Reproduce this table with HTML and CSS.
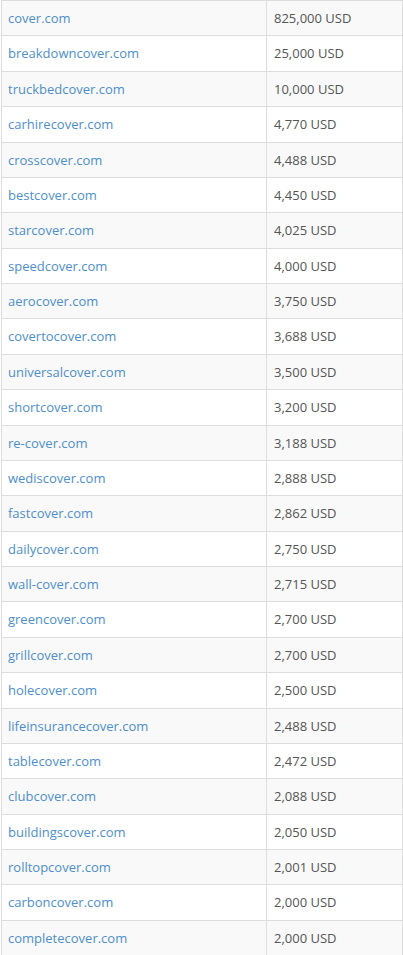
FILE: index.html
```html
<!DOCTYPE html>
<html lang="en">
<head>
  <meta charset="UTF-8" />
  <meta name="viewport" content="width=device-width, initial-scale=1.0"/>
  <title>Cover domains</title>
  <link rel="stylesheet" href="styles.css">
</head>
<body>
  <table class="sales">
    <tbody>
      <tr><td><a href="#">cover.com</a></td><td>825,000 USD</td></tr>
      <tr><td><a href="#">breakdowncover.com</a></td><td>25,000 USD</td></tr>
      <tr><td><a href="#">truckbedcover.com</a></td><td>10,000 USD</td></tr>
      <tr><td><a href="#">carhirecover.com</a></td><td>4,770 USD</td></tr>
      <tr><td><a href="#">crosscover.com</a></td><td>4,488 USD</td></tr>
      <tr><td><a href="#">bestcover.com</a></td><td>4,450 USD</td></tr>
      <tr><td><a href="#">starcover.com</a></td><td>4,025 USD</td></tr>
      <tr><td><a href="#">speedcover.com</a></td><td>4,000 USD</td></tr>
      <tr><td><a href="#">aerocover.com</a></td><td>3,750 USD</td></tr>
      <tr><td><a href="#">covertocover.com</a></td><td>3,688 USD</td></tr>
      <tr><td><a href="#">universalcover.com</a></td><td>3,500 USD</td></tr>
      <tr><td><a href="#">shortcover.com</a></td><td>3,200 USD</td></tr>
      <tr><td><a href="#">re-cover.com</a></td><td>3,188 USD</td></tr>
      <tr><td><a href="#">wediscover.com</a></td><td>2,888 USD</td></tr>
      <tr><td><a href="#">fastcover.com</a></td><td>2,862 USD</td></tr>
      <tr><td><a href="#">dailycover.com</a></td><td>2,750 USD</td></tr>
      <tr><td><a href="#">wall-cover.com</a></td><td>2,715 USD</td></tr>
      <tr><td><a href="#">greencover.com</a></td><td>2,700 USD</td></tr>
      <tr><td><a href="#">grillcover.com</a></td><td>2,700 USD</td></tr>
      <tr><td><a href="#">holecover.com</a></td><td>2,500 USD</td></tr>
      <tr><td><a href="#">lifeinsurancecover.com</a></td><td>2,488 USD</td></tr>
      <tr><td><a href="#">tablecover.com</a></td><td>2,472 USD</td></tr>
      <tr><td><a href="#">clubcover.com</a></td><td>2,088 USD</td></tr>
      <tr><td><a href="#">buildingscover.com</a></td><td>2,050 USD</td></tr>
      <tr><td><a href="#">rolltopcover.com</a></td><td>2,001 USD</td></tr>
      <tr><td><a href="#">carboncover.com</a></td><td>2,000 USD</td></tr>
      <tr><td><a href="#">completecover.com</a></td><td>2,000 USD</td></tr>
    </tbody>
  </table>
</body>
</html>
```

FILE: styles.css
```css
* {
  margin: 0;
  padding: 0;
  box-sizing: border-box;
}

body {
  background: #fff;
  font-family: 'Open Sans', sans-serif;
  font-size: 13px;
  color: #555;
}

.sales {
  width: 402px;
  margin-left: 1px;
  border-collapse: collapse;
}

.sales td {
  border: 1px solid #ddd;
  padding: 8px 7px;
  line-height: 18.37px;
  vertical-align: top;
}

.sales td:first-child {
  width: 265px;
  padding-left: 6px;
}

.sales tr:nth-child(odd) {
  background-color: #f9f9f9;
}

.sales a {
  color: #4d8fcc;
  text-decoration: none;
}
```
